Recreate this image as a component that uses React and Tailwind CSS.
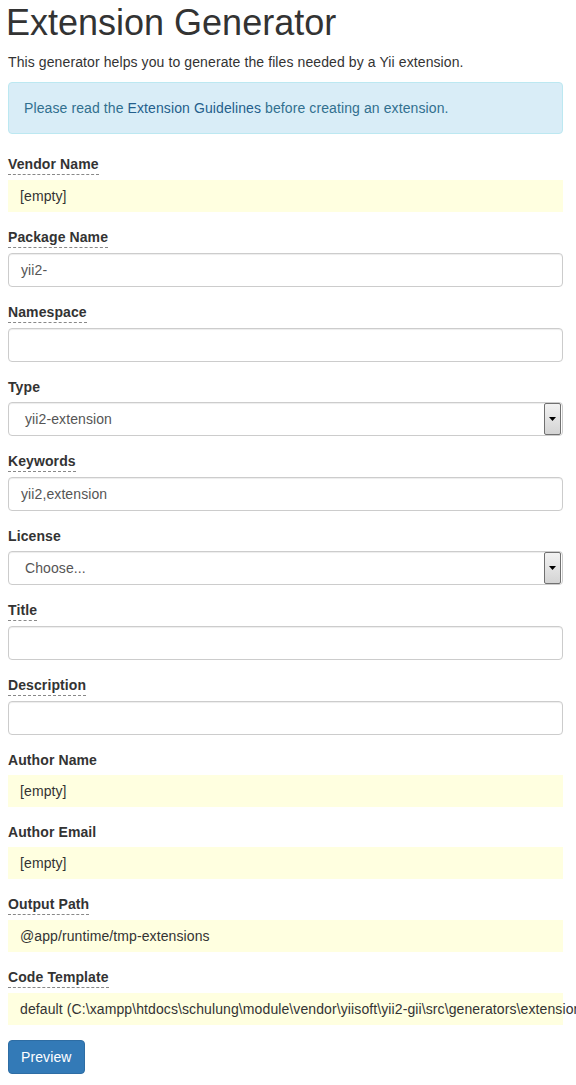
const font = { fontFamily: '"Liberation Sans", Arial, sans-serif' };

const fields = [
  { label: 'Vendor Name', kind: 'sticky', value: '[empty]', hint: true },
  { label: 'Package Name', kind: 'input', value: 'yii2-', hint: true },
  { label: 'Namespace', kind: 'input', value: '', hint: true },
  { label: 'Type', kind: 'select', value: 'yii2-extension' },
  { label: 'Keywords', kind: 'input', value: 'yii2,extension', hint: true },
  { label: 'License', kind: 'select', value: 'Choose...' },
  { label: 'Title', kind: 'input', value: '', hint: true },
  { label: 'Description', kind: 'input', value: '', hint: true },
  { label: 'Author Name', kind: 'sticky', value: '[empty]' },
  { label: 'Author Email', kind: 'sticky', value: '[empty]' },
  { label: 'Output Path', kind: 'sticky', value: '@app/runtime/tmp-extensions', hint: true },
  {
    label: 'Code Template',
    kind: 'sticky',
    value: 'default (C:\\xampp\\htdocs\\schulung\\module\\vendor\\yiisoft\\yii2-gii\\src\\generators\\extension\\default)',
    hint: true,
  },
];

const Field = ({ field }) => {
  return (
    <div className="mb-[15px]">
      <label
        className={`block w-fit mb-[5px] text-[14px] leading-5 font-bold text-[#333] tracking-[0.1px] ${
          field.hint ? 'border-b border-dashed border-[#888]' : ''
        }`}
      >
        {field.label}
      </label>

      {field.kind === 'sticky' && (
        <div className="h-8 bg-[#ffffe0] px-3 py-[6px] text-[14px] leading-5 text-[#333] tracking-[0.1px] whitespace-nowrap">
          {field.value}
        </div>
      )}

      {field.kind === 'input' && (
        <div className="h-[34px] rounded border border-[#ccc] bg-white px-3 py-[6px] text-[14px] leading-5 text-[#555] tracking-[0.1px] shadow-[inset_0_1px_1px_rgba(0,0,0,0.075)]">
          {field.value}
        </div>
      )}

      {field.kind === 'select' && (
        <div className="flex h-[34px] items-stretch rounded border border-[#ccc] bg-white shadow-[inset_0_1px_1px_rgba(0,0,0,0.075)]">
          <div className="flex-1 pl-4 py-[6px] text-[14px] leading-5 text-[#555] tracking-[0.1px]">{field.value}</div>
          <div className="mr-[1px] flex w-[17px] items-center justify-center rounded-[2px] border border-[#707070] bg-gradient-to-b from-[#f2f2f2] to-[#d4d4d4]">
            <svg width="7" height="4" viewBox="0 0 7 4">
              <path d="M0 0h7L3.5 4z" fill="#000" />
            </svg>
          </div>
        </div>
      )}
    </div>
  );
};

export default function App() {
  return (
    <div className="w-[576px] overflow-hidden bg-white pl-2 pr-[13px] pb-2" style={font}>
      <h1 className="mt-[3px] mb-[9px] -ml-[2px] text-[36px] leading-[1.1] font-normal text-[#333]">
        Extension Generator
      </h1>
      <p className="mb-[10px] text-[14px] leading-5 text-[#333] tracking-[0.1px]">
        This generator helps you to generate the files needed by a Yii extension.
      </p>

      <div className="mb-5 rounded border border-[#bce8f1] bg-[#d9edf7] p-[15px] text-[14px] leading-5 text-[#31708f] tracking-[0.1px]">
        Please read the <a className="text-[#245f8c]">Extension Guidelines</a> before creating an extension.
      </div>

      <form>
        {fields.map((field) => (
          <Field key={field.label} field={field} />
        ))}
        <button
          type="button"
          className="rounded border border-[#2e6da4] bg-[#337ab7] px-3 py-[6px] text-[14px] leading-5 text-white tracking-[0.1px]"
        >
          Preview
        </button>
      </form>
    </div>
  );
}
